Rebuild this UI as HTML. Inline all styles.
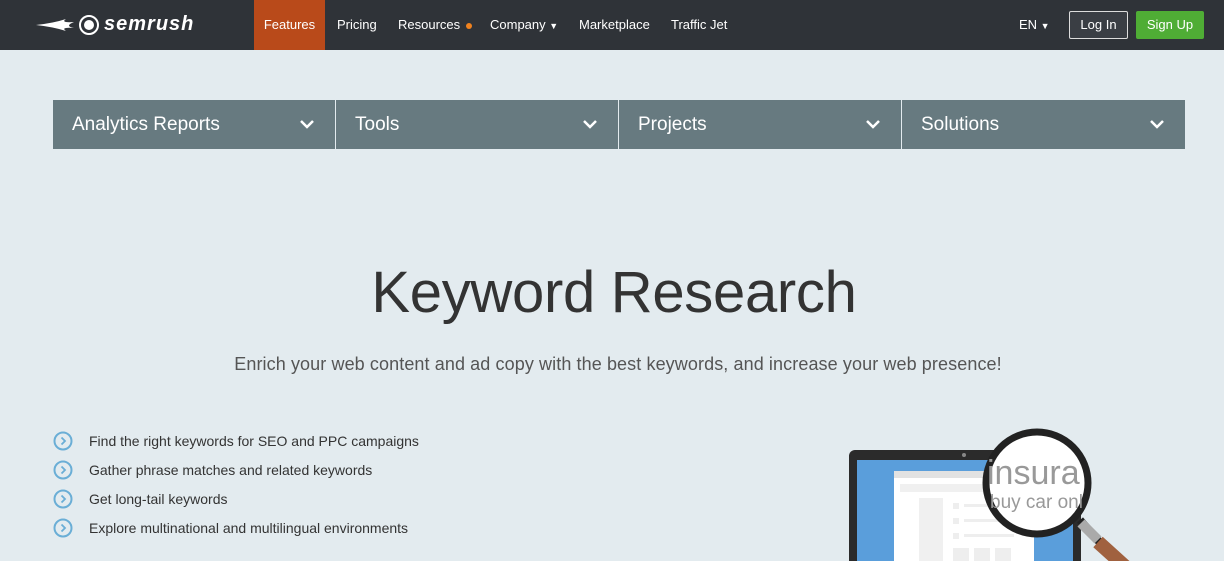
<!DOCTYPE html>
<html><head><style>
*{margin:0;padding:0;box-sizing:border-box}
body{width:1224px;height:561px;overflow:hidden;background:#e3ebef;font-family:"Liberation Sans",sans-serif;position:relative}
.nav{position:absolute;left:0;top:0;width:1224px;height:50px;background:#2f3338;color:#fff;font-size:13px}
.nav a{position:absolute;top:0;height:50px;line-height:50px;color:#fff}
.bar{position:absolute;top:100px;height:49px;background:#677a80;color:#fff;font-size:19px;line-height:49px;padding-left:19px}
.bar svg{position:absolute;right:20px;top:18px}
h1{position:absolute;top:259px;left:0;width:1224px;padding-left:4px;text-align:center;font-weight:normal;font-size:58px;color:#333;letter-spacing:-0.3px}
.sub{position:absolute;top:354px;left:0;width:1224px;padding-left:12px;text-align:center;font-size:18px;color:#555;letter-spacing:0.1px}
.li{position:absolute;left:53px;font-size:14px;color:#333;height:20px;line-height:20px}
.li span{position:absolute;left:36px;white-space:nowrap}
.li svg{position:absolute;left:0;top:0}
</style></head><body>
<div class="nav">
<svg style="position:absolute;left:34px;top:14px" width="66" height="22" viewBox="0 0 66 22"><path d="M2 11 Q20 9 32 5 Q26 9 40 8 Q30 12 40 14 Q26 13 32 17 Q20 13 2 11Z" fill="#fff"/><circle cx="55" cy="11" r="9" fill="none" stroke="#fff" stroke-width="2"/><circle cx="55" cy="11" r="5" fill="#fff"/></svg>
<span style="position:absolute;left:104px;top:13px;font-size:20px;font-weight:bold;font-style:italic;letter-spacing:1px">semrush</span>
<a style="left:254px;width:71px;background:#b94a1a;text-align:center">Features</a>
<a style="left:337px">Pricing</a>
<a style="left:398px">Resources <span style="display:inline-block;width:6px;height:6px;border-radius:3px;background:#f0821e;vertical-align:middle;margin-left:2px"></span></a>
<a style="left:490px">Company <span style="font-size:9px">▼</span></a>
<a style="left:579px">Marketplace</a>
<a style="left:671px">Traffic Jet</a>
<a style="left:1019px">EN <span style="font-size:9px">▼</span></a>
<div style="position:absolute;left:1069px;top:11px;width:59px;height:28px;border:1px solid #ddd;border-radius:2px;text-align:center;line-height:26px;background:#3a3e44">Log In</div>
<div style="position:absolute;left:1136px;top:11px;width:68px;height:28px;background:#4fad35;border-radius:2px;text-align:center;line-height:28px">Sign Up</div>
</div>
<div class="bar" style="left:53px;width:282px">Analytics Reports<svg width="16" height="12"><path d="M2 3l6 6 6-6" stroke="#fff" stroke-width="2.5" fill="none"/></svg></div>
<div class="bar" style="left:336px;width:282px">Tools<svg width="16" height="12"><path d="M2 3l6 6 6-6" stroke="#fff" stroke-width="2.5" fill="none"/></svg></div>
<div class="bar" style="left:619px;width:282px">Projects<svg width="16" height="12"><path d="M2 3l6 6 6-6" stroke="#fff" stroke-width="2.5" fill="none"/></svg></div>
<div class="bar" style="left:902px;width:283px">Solutions<svg width="16" height="12"><path d="M2 3l6 6 6-6" stroke="#fff" stroke-width="2.5" fill="none"/></svg></div>
<h1>Keyword Research</h1>
<div class="sub">Enrich your web content and ad copy with the best keywords, and increase your web presence!</div>
<div class="li" style="top:431px"><svg width="20" height="20"><circle cx="10" cy="10" r="8.5" stroke="#6aaed6" stroke-width="2" fill="none"/><path d="M8.5 6.5l3.5 3.5-3.5 3.5" stroke="#6aaed6" stroke-width="1.8" fill="none"/></svg><span>Find the right keywords for SEO and PPC campaigns</span></div>
<div class="li" style="top:460px"><svg width="20" height="20"><circle cx="10" cy="10" r="8.5" stroke="#6aaed6" stroke-width="2" fill="none"/><path d="M8.5 6.5l3.5 3.5-3.5 3.5" stroke="#6aaed6" stroke-width="1.8" fill="none"/></svg><span>Gather phrase matches and related keywords</span></div>
<div class="li" style="top:489px"><svg width="20" height="20"><circle cx="10" cy="10" r="8.5" stroke="#6aaed6" stroke-width="2" fill="none"/><path d="M8.5 6.5l3.5 3.5-3.5 3.5" stroke="#6aaed6" stroke-width="1.8" fill="none"/></svg><span>Get long-tail keywords</span></div>
<div class="li" style="top:518px"><svg width="20" height="20"><circle cx="10" cy="10" r="8.5" stroke="#6aaed6" stroke-width="2" fill="none"/><path d="M8.5 6.5l3.5 3.5-3.5 3.5" stroke="#6aaed6" stroke-width="1.8" fill="none"/></svg><span>Explore multinational and multilingual environments</span></div>
<svg style="position:absolute;left:840px;top:420px" width="300" height="141" viewBox="0 0 300 141">
<rect x="9" y="30" width="232" height="130" rx="6" fill="#2b2b2b"/>
<rect x="17" y="40" width="216" height="110" fill="#5a9edb"/>
<circle cx="124" cy="35" r="2" fill="#888"/>
<rect x="54" y="51" width="140" height="100" fill="#fff"/>
<rect x="54" y="51" width="140" height="7" fill="#e2e2e2"/>
<rect x="60" y="64" width="120" height="8" fill="#f0f0f0"/>
<rect x="79" y="78" width="24" height="70" fill="#f0f0f0"/>
<rect x="113" y="83" width="6" height="6" fill="#eee"/><rect x="124" y="84" width="50" height="3" fill="#eee"/>
<rect x="113" y="98" width="6" height="6" fill="#eee"/><rect x="124" y="99" width="50" height="3" fill="#eee"/>
<rect x="113" y="113" width="6" height="6" fill="#eee"/><rect x="124" y="114" width="50" height="3" fill="#eee"/>
<rect x="113" y="128" width="16" height="20" fill="#eee"/><rect x="134" y="128" width="16" height="20" fill="#eee"/><rect x="155" y="128" width="16" height="20" fill="#eee"/>
<path d="M240 100 L262 125" stroke="#222" stroke-width="8"/>
<path d="M258 122 L300 160" stroke="#a0613f" stroke-width="14"/>
<path d="M241 103 L258 120" stroke="#aaa" stroke-width="10"/>
<circle cx="197" cy="63" r="51" fill="#fff" stroke="#222" stroke-width="7"/>
<text x="147" y="64" font-family="Liberation Sans" font-size="34" fill="#999">insura</text>
<text x="150" y="88" font-family="Liberation Sans" font-size="19" fill="#999">buy car onl</text>
</svg>
</body></html>
